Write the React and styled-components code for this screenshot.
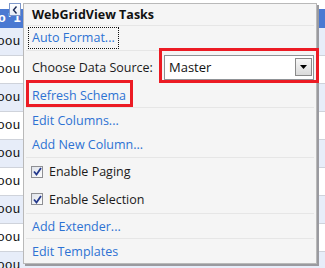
import styled, { createGlobalStyle } from "styled-components";

const GlobalStyle = createGlobalStyle`
  html, body {
    margin: 0;
    padding: 0;
    background: #ffffff;
  }
  body {
    font-family: "Open Sans", "Noto Sans", sans-serif;
  }
`;

const Page = styled.div`
  position: relative;
  width: 325px;
  height: 268px;
  overflow: hidden;
  background: #ffffff;
`;

const Grid = styled.div`
  display: flex;
  flex-direction: column;
  width: 325px;
  padding-top: 9px;
`;

const GridHeader = styled.div`
  height: 19px;
  background: #4a79d2;
  color: #ffffff;
  font-family: "Liberation Mono", monospace;
  font-weight: 700;
  font-size: 13px;
  line-height: 19px;
  text-indent: -2px;
`;

const GridRow = styled.div`
  height: 27px;
  border-bottom: 1px solid #cfd3db;
  background: ${(p) => (p.$alt ? "#e7edf9" : "#ffffff")};
  display: flex;
  align-items: center;
  font-family: "Liberation Mono", monospace;
  font-size: 13px;
  color: #111;
  text-indent: -3px;
`;

const SmartTag = styled.div`
  position: absolute;
  left: 9px;
  top: 3px;
  width: 12px;
  height: 13px;
  box-sizing: border-box;
  border: 1px solid #7e97c9;
  background: linear-gradient(#ffffff, #e9eef8);
  display: flex;
  align-items: center;
  justify-content: center;
`;

const Panel = styled.div`
  position: absolute;
  left: 23px;
  top: 3px;
  width: 294px;
  height: 261px;
  box-sizing: border-box;
  border: 1px solid #b9b9b9;
  background: #f5f5f5;
  box-shadow: 2px 2px 0 #9a9a9f;
  display: flex;
  flex-direction: column;
  font-size: 12.5px;
  color: #1b1b1b;
`;

const Section = styled.div`
  height: ${(p) => p.$h}px;
  box-sizing: border-box;
  display: flex;
  flex-direction: column;
  border-bottom: ${(p) => (p.$last ? "none" : "1px solid #e6e6e6")};
  margin: 0 2px;
`;

const Title = styled.div`
  flex: 1;
  display: flex;
  align-items: center;
  padding-left: 6px;
  font-weight: 700;
  color: #111;
`;

const Row = styled.div`
  height: ${(p) => p.$h}px;
  display: flex;
  align-items: center;
  padding-left: ${(p) => p.$pad ?? 6}px;
  position: relative;
`;

const Link = styled.span`
  color: #2d72d3;
  cursor: pointer;
`;

const FocusLink = styled(Link)`
  margin-left: -4px;
  padding: 1px 3px 2px 3px;
  border: 1px dotted #111;
`;

const Label = styled.span`
  width: 132px;
`;

const Select = styled.div`
  width: 150px;
  height: 25px;
  box-sizing: border-box;
  border: 1px solid #8f9296;
  background: #ffffff;
  display: flex;
  align-items: center;
  justify-content: space-between;
  padding: 0 1px 0 4px;
  font-size: 13px;
  color: #111;
`;

const DropButton = styled.div`
  width: 17px;
  height: 18px;
  box-sizing: border-box;
  border: 1px solid #8a8a8a;
  background: linear-gradient(#f7f7f7, #dadada);
  display: flex;
  align-items: center;
  justify-content: center;
`;

const Check = styled.div`
  width: 12px;
  height: 12px;
  box-sizing: border-box;
  border: 1px solid #8e8f93;
  background: linear-gradient(135deg, #dfe3ea, #fdfdfd);
  margin-right: 6px;
  display: flex;
  align-items: center;
  justify-content: center;
`;

const RedFrame = styled.div`
  position: absolute;
  left: ${(p) => p.$x}px;
  top: ${(p) => p.$y}px;
  width: ${(p) => p.$w}px;
  height: ${(p) => p.$hh}px;
  box-sizing: border-box;
  border: 3px solid #ec1b24;
  pointer-events: none;
`;

function CheckMark() {
  return (
    <svg width="9" height="9" viewBox="0 0 9 9">
      <path d="M1 4.5 L3.5 7.5 L8 1" fill="none" stroke="#24398c" strokeWidth="1.8" />
    </svg>
  );
}

function CheckRow({ h, children }) {
  return (
    <Row $h={h} $pad={5}>
      <Check><CheckMark /></Check>
      <span>{children}</span>
    </Row>
  );
}

export default function App() {
  const rows = Array.from({ length: 9 }, (_, i) => i);

  return (
    <>
      <GlobalStyle />
      <Page>
        <Grid>
          <GridHeader>o'I</GridHeader>
          {rows.map((i) => (
            <GridRow key={i} $alt={i % 2 === 0}>oou</GridRow>
          ))}
        </Grid>

        <SmartTag>
          <svg width="6" height="8" viewBox="0 0 6 8">
            <path d="M4.5 0.5 L1.5 4 L4.5 7.5" fill="none" stroke="#1d2b55" strokeWidth="1.4" />
          </svg>
        </SmartTag>

        <Panel>
          <Section $h={22}>
            <Title>WebGridView Tasks</Title>
          </Section>
          <Section $h={25}>
            <Row $h={24}>
              <FocusLink>Auto Format...</FocusLink>
            </Row>
          </Section>
          <Section $h={57}>
            <Row $h={32}>
              <Label>Choose Data Source:</Label>
              <Select>
                <span>Master</span>
                <DropButton>
                  <svg width="7" height="4" viewBox="0 0 7 4">
                    <path d="M0 0 L7 0 L3.5 4 Z" fill="#000" />
                  </svg>
                </DropButton>
              </Select>
            </Row>
            <Row $h={24}>
              <Link>Refresh Schema</Link>
            </Row>
          </Section>
          <Section $h={50}>
            <Row $h={24}>
              <Link>Edit Columns...</Link>
            </Row>
            <Row $h={25}>
              <Link>Add New Column...</Link>
            </Row>
          </Section>
          <Section $h={56}>
            <CheckRow h={27}>Enable Paging</CheckRow>
            <CheckRow h={28}>Enable Selection</CheckRow>
          </Section>
          <Section $h={25}>
            <Row $h={24}>
              <Link>Add Extender...</Link>
            </Row>
          </Section>
          <Section $h={24} $last>
            <Row $h={24}>
              <Link>Edit Templates</Link>
            </Row>
          </Section>
        </Panel>

        <RedFrame $x={159} $y={48} $w={160} $hh={35} />
        <RedFrame $x={26} $y={80} $w={107} $hh={27} />
      </Page>
    </>
  );
}
